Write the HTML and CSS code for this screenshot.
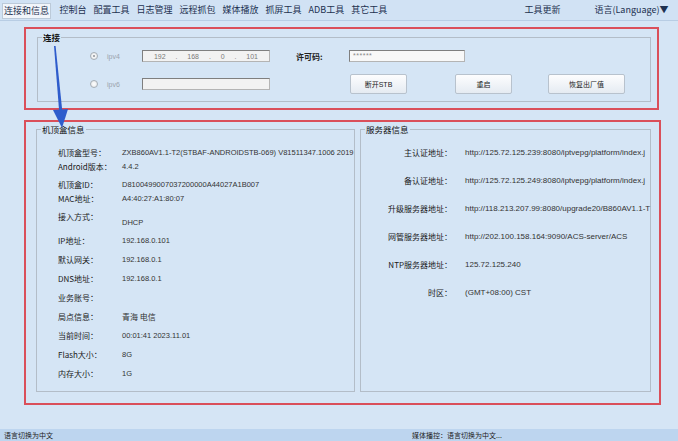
FILE: index.html
```html
<!DOCTYPE html>
<html lang="zh-CN">
<head>
    <meta charset="UTF-8">
    <title>机顶盒工具</title>
    <link rel="stylesheet" href="styles.css">
</head>
<body>

<div class="app">
    <!-- 顶部菜单 -->
    <div class="tabbar">
        <span class="tab active">连接和信息</span>
        <span class="tab">控制台</span>
        <span class="tab">配置工具</span>
        <span class="tab">日志管理</span>
        <span class="tab">远程抓包</span>
        <span class="tab">媒体播放</span>
        <span class="tab">抓屏工具</span>
        <span class="tab">ADB工具</span>
        <span class="tab">其它工具</span>
        <span class="tab tab-update">工具更新</span>
        <span class="tab tab-lang">语言(Language)▼</span>
    </div>

    <div class="main">
        <!-- 连接 -->
        <div class="mark mark-conn">
            <fieldset class="group group-conn">
                <legend>连接</legend>
                <div class="conn-grid">
                    <span class="radio on"></span>
                    <span class="ipv">ipv4</span>
                    <div class="field field-ip">
                        <span>192</span><span>.</span><span>168</span><span>.</span><span>0</span><span>.</span><span>101</span>
                    </div>
                    <span class="key">许可码:</span>
                    <div class="field field-pwd">******</div>

                    <span class="radio"></span>
                    <span class="ipv">ipv6</span>
                    <div class="field field-ip"></div>
                    <span></span>
                    <div class="buttons">
                        <button class="btn">断开STB</button>
                        <button class="btn btn-reboot">重启</button>
                        <button class="btn btn-reset">恢复出厂值</button>
                    </div>
                </div>
            </fieldset>
        </div>

        <!-- 信息 -->
        <div class="mark mark-info">
            <fieldset class="group group-box">
                <legend>机顶盒信息</legend>
                <div class="rows rows-box">
                    <div class="kv"><span class="k">机顶盒型号：</span><span class="v">ZXB860AV1.1-T2(STBAF-ANDROIDSTB-069) V81511347.1006 2019</span></div>
                    <div class="kv pair"><span class="k">Android版本：</span><span class="v">4.4.2</span></div>
                    <div class="kv near"><span class="k">机顶盒ID：</span><span class="v">D8100499007037200000A44027A1B007</span></div>
                    <div class="kv pair"><span class="k">MAC地址：</span><span class="v">A4:40:27:A1:80:07</span></div>
                    <div class="kv near access"><span class="k">接入方式：</span><span class="v">DHCP</span></div>
                    <div class="kv near"><span class="k">IP地址：</span><span class="v">192.168.0.101</span></div>
                    <div class="kv"><span class="k">默认网关：</span><span class="v">192.168.0.1</span></div>
                    <div class="kv"><span class="k">DNS地址：</span><span class="v">192.168.0.1</span></div>
                    <div class="kv"><span class="k">业务账号：</span><span class="v"></span></div>
                    <div class="kv"><span class="k">局点信息：</span><span class="v v-cn">青海 电信</span></div>
                    <div class="kv"><span class="k">当前时间：</span><span class="v">00:01:41 2023.11.01</span></div>
                    <div class="kv"><span class="k">Flash大小：</span><span class="v">8G</span></div>
                    <div class="kv"><span class="k">内存大小：</span><span class="v">1G</span></div>
                </div>
            </fieldset>

            <fieldset class="group group-server">
                <legend>服务器信息</legend>
                <div class="rows rows-server">
                    <div class="kv"><span class="k">主认证地址：</span><span class="v">http://125.72.125.239:8080/iptvepg/platform/index.j</span></div>
                    <div class="kv"><span class="k">备认证地址：</span><span class="v">http://125.72.125.249:8080/iptvepg/platform/index.j</span></div>
                    <div class="kv"><span class="k">升级服务器地址：</span><span class="v">http://118.213.207.99:8080/upgrade20/B860AV1.1-T</span></div>
                    <div class="kv"><span class="k">网管服务器地址：</span><span class="v">http://202.100.158.164:9090/ACS-server/ACS</span></div>
                    <div class="kv"><span class="k">NTP服务器地址：</span><span class="v">125.72.125.240</span></div>
                    <div class="kv"><span class="k">时区：</span><span class="v">(GMT+08:00) CST</span></div>
                </div>
            </fieldset>
        </div>
    </div>

    <!-- 状态栏 -->
    <div class="status">
        <span>语言切换为中文</span>
        <span>媒体播控：语言切换为中文...</span>
    </div>

    <!-- 标注箭头 -->
    <svg class="arrow" width="22" height="86" viewBox="0 0 22 86">
        <polygon points="6,2 7.6,2 14.4,68 11.2,68" fill="#2e5ccc"/>
        <polygon points="5,66 20,65 14,84" fill="#2e5ccc"/>
    </svg>
</div>

</body>
</html>
```

FILE: styles.css
```css
body { margin: 0; background-color: #d5e5f5; font-family: "Liberation Sans", "Noto Sans CJK SC", sans-serif; color: #222; }
.app { position: relative; width: 678px; height: 441px; display: flex; flex-direction: column; overflow: hidden; }

/* 顶部菜单 */
.tabbar { height: 20px; display: flex; align-items: center; padding: 0 6px 0 2px; background-color: #d1e2f4; border-bottom: 1px solid #b8cde4; font-family: "Noto Sans CJK SC", sans-serif; font-size: 9px; }
.tab { padding: 0 3.5px; line-height: 14px; color: #1d3150; white-space: nowrap; }
.tab.active { margin: 2px 5px 0 0; padding: 0 1px; background-color: #f1f5fa; border: 1px solid #bccad9; }
.tab-update { margin-left: auto; margin-right: 27px; }

.main { flex: 1; padding: 6px 0 0 24px; }

/* 红色标注框 */
.mark { box-sizing: border-box; border: 2px solid #da4f5a; }
.mark-conn { width: 635px; height: 83px; }
.mark-info { width: 637px; height: 285px; margin-top: 10px; padding: 2px 0 0 10px; display: flex; gap: 5px; }

.group { box-sizing: border-box; margin: 0; padding: 0; min-width: 0; border: 1px solid #b3bdc8; }
.group legend { margin-left: 4px; padding: 0 1px; font-family: "Noto Sans CJK SC", sans-serif; font-size: 8.5px; line-height: 10px; color: #111; }
.group-conn legend { font-weight: bold; }

/* 连接 */
.group-conn { width: 614px; height: 70px; margin: 3px 0 0 11px; }
.conn-grid { display: grid; grid-template-columns: 17px 35px 128px 79px auto; grid-template-rows: 26px 26px; row-gap: 2px; align-items: center; margin: 1px 0 0 52px; }
.radio { position: relative; width: 8px; height: 8px; box-sizing: border-box; border-radius: 50%; border: 1px solid #a6aeb6; background: radial-gradient(#ffffff, #e2e4e6); }
.radio.on::after { content: ""; position: absolute; left: 2px; top: 2px; width: 2px; height: 2px; border-radius: 50%; background-color: #8b9198; }
.ipv { font-size: 7px; color: #9ba4ae; }
.field { box-sizing: border-box; height: 12px; border: 1px solid #b4b4b4; border-top-color: #7f7f7f; border-left-color: #7f7f7f; background-color: #f2f2f2; font-size: 7px; color: #7a7a7a; }
.field-ip { width: 128px; display: flex; justify-content: space-around; align-items: center; padding: 0 6px; }
.field-pwd { width: 116px; padding-left: 3px; line-height: 10px; background-color: #f8f8f8; color: #8a8a8a; letter-spacing: 0.5px; }
.key { padding-left: 26px; font-family: "Noto Sans CJK SC", sans-serif; font-size: 8px; font-weight: bold; color: #222; }
.buttons { display: flex; padding-left: 1px; }
.btn { width: 57px; height: 20px; padding: 0; border: 1px solid #b8c2cd; border-radius: 2px; background: linear-gradient(#fdfdfe, #e5ebf2); font-family: "Liberation Sans", "Noto Sans CJK SC", sans-serif; font-size: 7px; color: #222; }
.btn-reboot { margin-left: 48px; }
.btn-reset { width: 77px; margin-left: 36px; }

/* 信息 */
.group-box { width: 319px; height: 268px; }
.group-server { width: 291px; height: 268px; }
.rows { padding-top: 12px; }
.rows-box { padding-left: 21px; }
.kv { display: flex; margin-top: 5px; line-height: 14px; white-space: nowrap; }
.kv:first-child { margin-top: 0; }
.kv.pair { margin-top: 0; }
.kv.near { margin-top: 4px; }
.kv .k { flex-shrink: 0; width: 64px; font-family: "Noto Sans CJK SC", sans-serif; font-size: 8px; color: #1a1a1a; }
.kv .v { font-size: 7.5px; color: #333; }
.kv .v-cn { font-family: "Noto Sans CJK SC", sans-serif; font-size: 8px; }
.kv.access { height: 20px; }
.kv.access .v { padding-top: 6px; }

.rows-server .kv { margin-top: 14px; }
.rows-server .kv:first-child { margin-top: 0; }
.rows-server .k { width: 91px; text-align: right; }
.rows-server .v { margin-left: 13px; font-size: 8px; }

/* 状态栏 */
.status { height: 12px; display: grid; grid-template-columns: 408px auto; padding-left: 4px; background-color: #bdd5ef; font-family: "Noto Sans CJK SC", sans-serif; font-size: 7px; line-height: 12px; color: #222; }

.arrow { position: absolute; left: 48px; top: 44px; }
```
